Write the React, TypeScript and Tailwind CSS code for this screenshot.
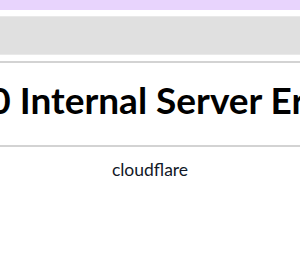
export default function App() {
  return (
    <div className="w-[300px] h-[280px] overflow-hidden bg-white" style={{ fontFamily: 'Lato, sans-serif' }}>
      <div className="h-[10px] bg-[#e8d4fd]" />
      <div className="mt-[6px] h-[39px] bg-[#e0e0e0] border-y border-[#e9e9e9]" />
      <hr className="mt-[6px] border-t-2 border-[#d3d3d3]" />
      <div className="flex justify-center h-[82px] items-center pb-[10px]">
        <h1 className="whitespace-nowrap text-[37px] font-bold text-black leading-none">500 Internal Server Error</h1>
      </div>
      <hr className="border-t-2 border-[#d3d3d3]" />
      <p className="mt-[13px] text-center text-[17.5px] leading-[20px] text-[#111827]">cloudflare</p>
    </div>
  );
}
